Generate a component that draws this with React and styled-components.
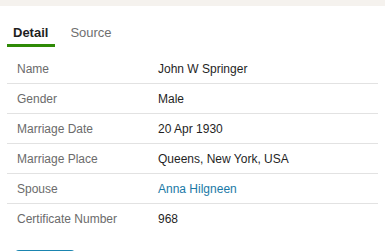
import React from 'react'
import styled, { createGlobalStyle } from 'styled-components'

const GlobalStyle = createGlobalStyle`
  body {
    margin: 0;
    background: #fff;
    font-family: "Liberation Sans", Arial, sans-serif;
  }
`

const rows = [
  { label: 'Name', value: 'John W Springer' },
  { label: 'Gender', value: 'Male' },
  { label: 'Marriage Date', value: '20 Apr 1930' },
  { label: 'Marriage Place', value: 'Queens, New York, USA' },
  { label: 'Spouse', value: 'Anna Hilgneen', link: true },
  { label: 'Certificate Number', value: '968' },
]

const App = () => {
  return (
    <Page>
      <GlobalStyle />
      <TopBar />
      <Panel>
        <Tabs>
          <Tab active>Detail</Tab>
          <Tab>Source</Tab>
        </Tabs>
        <Table>
          {rows.map((r) => (
            <Row key={r.label}>
              <Label>{r.label}</Label>
              <Value link={r.link}>{r.value}</Value>
            </Row>
          ))}
        </Table>
        <Button aria-label="Save" />
      </Panel>
    </Page>
  )
}

const Page = styled.div`
  height: 251px;
  overflow: hidden;
`

const TopBar = styled.div`
  height: 6px;
  background: #f5f2ee;
`

const Panel = styled.div`
  padding: 0 7px;
`

const Tabs = styled.div`
  display: flex;
  gap: 9px;
  margin-top: 11px;
`

const Tab = styled.div.withConfig({ shouldForwardProp: (p) => p !== 'active' })`
  padding: 8px 7px 3px 6px;
  line-height: 16px;
  font-size: 13px;
  font-weight: ${(p) => (p.active ? 700 : 400)};
  color: ${(p) => (p.active ? '#1e1e1e' : '#6f6f6f')};
  border-bottom: 3px solid ${(p) => (p.active ? '#2f8a06' : 'transparent')};
`

const Table = styled.div`
  margin-top: 7px;
  width: 371px;
`

const Row = styled.div`
  display: grid;
  grid-template-columns: 141px 1fr;
  align-items: center;
  height: 30px;
  box-sizing: border-box;
  padding-left: 10px;
  font-size: 12px;
  border-bottom: 1px solid #e2e2e2;
  &:last-child {
    border-bottom: none;
  }
`

const Label = styled.div`
  color: #6b6b6b;
`

const Value = styled.div.withConfig({ shouldForwardProp: (p) => p !== 'link' })`
  color: ${(p) => (p.link ? '#1a79a6' : '#1f1f1f')};
`

const Button = styled.button`
  display: block;
  margin: 16px 0 0 8px;
  width: 60px;
  height: 30px;
  border: none;
  border-radius: 4px;
  background: #1a85b0;
`

export default App
